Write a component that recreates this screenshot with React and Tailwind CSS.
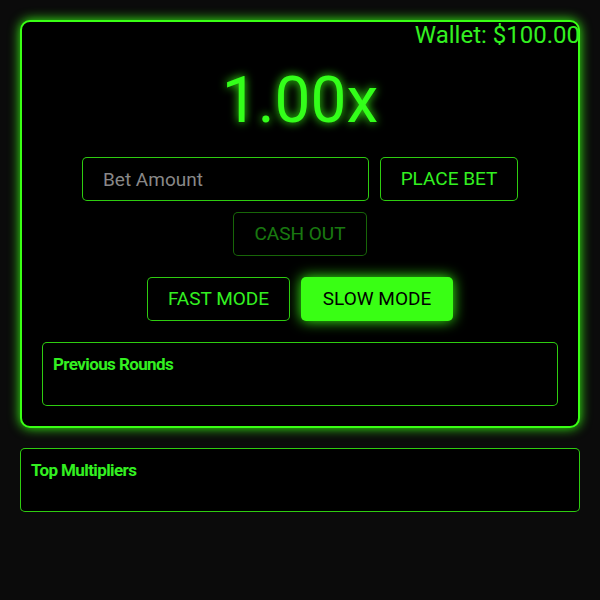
import React, { useState } from 'react';

const font = { fontFamily: 'Roboto, "Liberation Sans", sans-serif' };

function HistoryBox({ title }) {
  return (
    <div className="border border-[#39ff14]/80 rounded-[5px] px-[10px] pt-[10px] h-[64px] bg-black">
      <h3 className="text-[17px] leading-[22px] font-bold tracking-[-0.6px] text-[#33f020]">{title}</h3>
    </div>
  );
}

export default function App() {
  const [mode, setMode] = useState('slow');
  const [bet, setBet] = useState('');

  const outline =
    'h-[44px] px-0 whitespace-nowrap rounded-[5px] border border-[#39ff14]/80 bg-black text-[19px] text-[#33f020]';
  const filled =
    'h-[44px] px-0 whitespace-nowrap rounded-[5px] bg-[#39ff14] text-[19px] text-black shadow-[0_0_14px_#39ff14]';

  return (
    <div className="min-h-[600px] bg-[#0b0b0b] p-5" style={font}>
      <div className="relative rounded-[10px] border-2 border-[#39ff14] bg-black px-5 pb-5 shadow-[0_0_12px_#39ff14]">
        <div className="absolute -right-[2px] top-[-1px] text-[24px] leading-[28px] text-[#33f020]">
          Wallet: $100.00
        </div>

        <div className="pt-[41px] pb-[18px] text-center text-[64px] leading-[76px] text-[#33ff1a] [text-shadow:0_0_10px_#39ff14]">
          1.00x
        </div>

        <div className="flex flex-wrap justify-center gap-x-[11px] gap-y-[11px]">
          <input
            value={bet}
            onChange={(e) => setBet(e.target.value)}
            placeholder="Bet Amount"
            className="h-[44px] w-[287px] px-5 rounded-[5px] border border-[#39ff14]/80 bg-black text-[19px] text-[#33f020] placeholder:text-[#888] outline-none"
          />
          <button className={`${outline} w-[138px]`}>PLACE BET</button>
          <button className={`${outline} w-[134px] opacity-50`} disabled>
            CASH OUT
          </button>
        </div>

        <div className="mt-[21px] flex justify-center gap-[11px]">
          <button
            onClick={() => setMode('fast')}
            className={mode === 'fast' ? `${filled} w-[143px]` : `${outline} w-[143px]`}
          >
            FAST MODE
          </button>
          <button
            onClick={() => setMode('slow')}
            className={mode === 'slow' ? `${filled} w-[152px]` : `${outline} w-[152px]`}
          >
            SLOW MODE
          </button>
        </div>

        <div className="mt-[21px]">
          <HistoryBox title="Previous Rounds" />
        </div>
      </div>

      <div className="mt-5">
        <HistoryBox title="Top Multipliers" />
      </div>
    </div>
  );
}
